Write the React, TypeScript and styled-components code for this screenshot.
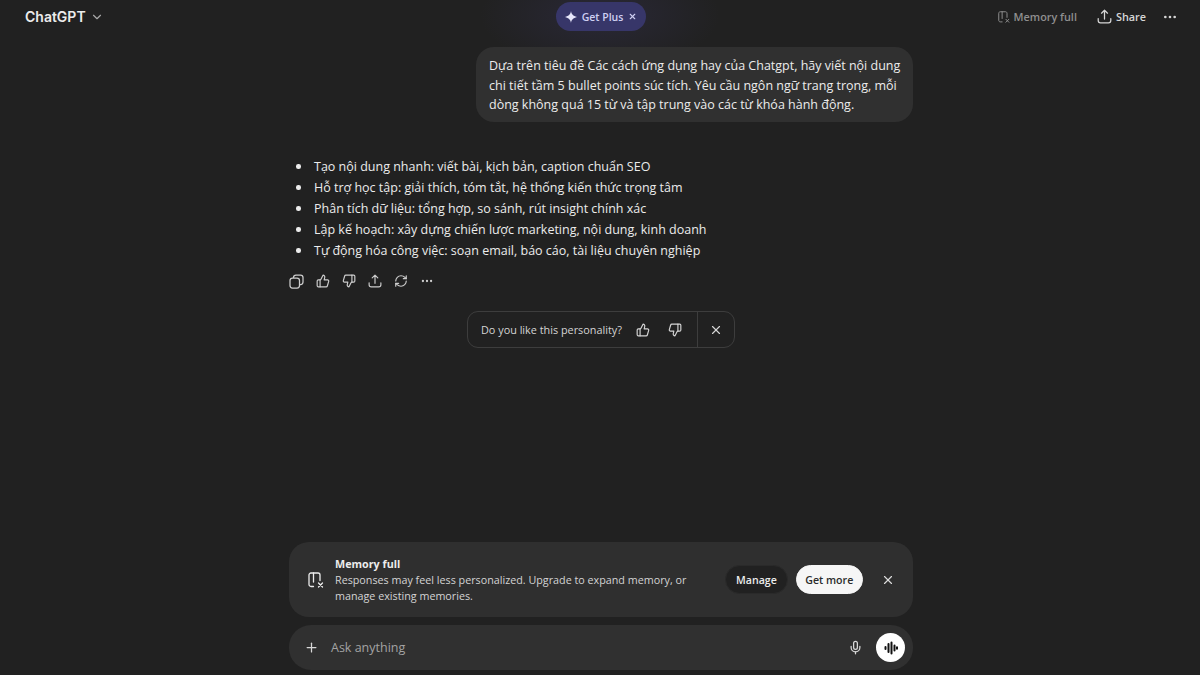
import React from 'react';
import styled, { createGlobalStyle } from 'styled-components';
import { ChevronDown, Ellipsis, Mic, Plus, RefreshCw, ThumbsDown, ThumbsUp, X } from 'lucide-react';

const GlobalStyle = createGlobalStyle`
  html, body {
    margin: 0;
    height: 100%;
    background: #212121;
    overflow: hidden;
  }

  body {
    font-family: "Open Sans", "Liberation Sans", sans-serif;
    color: #ececec;
  }
`;

const Page = styled.div`
  position: relative;
  height: 675px;
  display: flex;
  flex-direction: column;
  background: #212121;
`;

const Glow = styled.div`
  position: absolute;
  left: 480px;
  top: -40px;
  width: 240px;
  height: 110px;
  background: radial-gradient(closest-side, rgba(70, 64, 130, 0.22), rgba(70, 64, 130, 0));
  pointer-events: none;
`;

const Header = styled.header`
  position: relative;
  height: 33px;
  display: grid;
  grid-template-columns: 1fr auto 1fr;
  align-items: center;
  padding: 0 23px 0 25px;
`;

const Brand = styled.div`
  display: flex;
  align-items: center;
  gap: 4px;
  font-family: Inter, sans-serif;
  font-size: 14px;
  font-weight: 600;
  color: #ececec;

  svg {
    color: #a8a8a8;
  }
`;

const PlusPill = styled.div`
  height: 29px;
  width: 90px;
  box-sizing: border-box;
  display: flex;
  align-items: center;
  justify-content: center;
  gap: 5px;
  border-radius: 15px;
  background: #373669;
  color: #cfcff2;
  font-size: 10.5px;
  font-weight: 600;
`;

const HeaderActions = styled.div`
  display: flex;
  justify-content: flex-end;
  align-items: center;
  margin-right: -1px;
`;

const HeaderAction = styled.div<{ $muted?: boolean; $gap: number }>`
  display: flex;
  align-items: center;
  gap: 4px;
  margin-right: ${p => p.$gap}px;
  font-size: 10.85px;
  font-weight: 600;
  color: ${p => (p.$muted ? '#8f8f8f' : '#d6d6d6')};
`;

const Main = styled.main`
  position: relative;
  flex: 1;
  width: 624px;
  margin: 0 287px 0 289px;
  padding-top: 14px;
  display: flex;
  flex-direction: column;
`;

const Bubble = styled.div`
  align-self: flex-end;
  width: 437px;
  height: 75px;
  box-sizing: border-box;
  padding: 9px 13px;
  border-radius: 18px;
  background: #303030;
  font-size: 12.5px;
  line-height: 19.5px;
  color: #ececec;
  white-space: nowrap;
`;

const Answer = styled.ul`
  margin: 34px 0 0;
  padding: 0 0 0 25px;
  list-style: none;
  font-size: 12.5px;
  line-height: 21px;
  color: #ececec;
  white-space: nowrap;
`;

const AnswerItem = styled.li`
  position: relative;

  &::before {
    content: '';
    position: absolute;
    left: -18px;
    top: 8px;
    width: 4.5px;
    height: 4.5px;
    border-radius: 50%;
    background: #ececec;
  }
`;

const Toolbar = styled.div`
  display: flex;
  gap: 12px;
  margin: 13px 0 0;
  color: #cdcdcd;
`;

const Feedback = styled.div`
  align-self: center;
  margin-top: 22px;
  width: 268px;
  height: 37px;
  box-sizing: border-box;
  display: flex;
  align-items: center;
  border: 1px solid #3d3d3d;
  border-radius: 11px;
  font-size: 10.85px;
  color: #d4d4d4;
  padding-left: 13px;
`;

const FeedbackText = styled.span`
  width: 155px;
  white-space: nowrap;
`;

const FeedbackIcons = styled.div`
  display: flex;
  gap: 18px;
  width: 61px;
  color: #d4d4d4;
`;

const FeedbackClose = styled.div`
  flex: 1;
  align-self: stretch;
  display: flex;
  align-items: center;
  justify-content: center;
  border-left: 1px solid #3d3d3d;
`;

const Footer = styled.footer`
  width: 624px;
  margin: 0 287px 5px 289px;
  display: flex;
  flex-direction: column;
  gap: 8px;
`;

const Banner = styled.div`
  height: 75px;
  box-sizing: border-box;
  display: flex;
  align-items: center;
  padding: 0 18px 0 19px;
  border-radius: 20px;
  background: #2f2f2f;
`;

const BannerText = styled.div`
  width: 390px;
  margin-left: 11px;
  font-size: 10.75px;
  line-height: 16px;
  color: #d4d4d4;
`;

const BannerTitle = styled.div`
  font-weight: 700;
  color: #ececec;
`;

const PillButton = styled.div<{ $light?: boolean }>`
  height: 29px;
  box-sizing: border-box;
  display: flex;
  align-items: center;
  padding: 0 ${p => (p.$light ? 8.5 : 10)}px;
  margin-right: 8px;
  border-radius: 15px;
  font-size: 10.6px;
  font-weight: 600;
  color: ${p => (p.$light ? '#2a2a2a' : '#ececec')};
  background: ${p => (p.$light ? '#f6f6f6' : '#212121')};
  border: 1px solid ${p => (p.$light ? '#f6f6f6' : '#2a2a2a')};
`;

const BannerClose = styled.div`
  margin-left: auto;
  display: flex;
  color: #dcdcdc;
`;

const Composer = styled.div`
  height: 45px;
  box-sizing: border-box;
  display: flex;
  align-items: center;
  padding: 0 8px 0 15px;
  border-radius: 22px;
  background: #303030;
  color: #d8d8d8;
`;

const Placeholder = styled.div`
  flex: 1;
  margin: 0 0 1px 12px;
  font-size: 12.5px;
  color: #a3a3a3;
`;

const VoiceButton = styled.div`
  width: 29px;
  height: 29px;
  margin-left: 13px;
  display: flex;
  align-items: center;
  justify-content: center;
  border-radius: 50%;
  background: #fff;
`;

const Sparkle = () => (
  <svg width="12" height="12" viewBox="0 0 12 12" fill="#e6e6fa">
    <path d="M6 0c.5 3.2 2 5 6 6-4 1-5.500 2.800-6 6-.5-3.200-2-5-6-6 4-1 5.500-2.800 6-6z" />
  </svg>
);

const MemoryIcon = ({ size }: { size: number }) => (
  <svg width={size} height={size} viewBox="0 0 16 16" fill="none" stroke="currentColor" strokeWidth="1.3" strokeLinecap="round">
    <path d="M5.500 14.500H3C1.900 14.500 1 13.600 1 12.500V3C1 1.900 1.900 1 3 1H10C11.100 1 12 1.900 12 3V8.500" />
    <path d="M5.500 1V10" />
    <path d="M10.500 11l4 4M14.500 11l-4 4" />
  </svg>
);

const CopyIcon = () => (
  <svg width="15" height="15" viewBox="0 0 15 15" fill="none" stroke="currentColor" strokeWidth="1.250">
    <rect x="1" y="4" width="9.500" height="10" rx="2.500" />
    <path d="M4.500 4V3.500C4.500 2.100 5.600 1 7 1H11.500C12.900 1 14 2.100 14 3.500V8C14 9.400 12.900 10.500 11.500 10.500H10.500" />
  </svg>
);

const ShareIcon = ({ size }: { size: number }) => (
  <svg width={size} height={size} viewBox="0 0 15 15" fill="none" stroke="currentColor" strokeWidth="1.250" strokeLinecap="round" strokeLinejoin="round">
    <path d="M7.500 10V1.200M4.500 4.200l3-3 3 3" />
    <path d="M1.200 9.500V11.500C1.200 12.900 2.100 13.800 3.500 13.800H11.500C12.900 13.800 13.800 12.900 13.800 11.500V9.500" />
  </svg>
);

const Waveform = () => (
  <svg width="14" height="14" viewBox="0 0 14 14" stroke="#111" strokeWidth="2" strokeLinecap="round">
    <path d="M1.500 6v2M4.500 3v8M7.500 1.500v11M10.500 4.500v5M13 6.200v1.600" />
  </svg>
);

const bullets = [
  'Tạo nội dung nhanh: viết bài, kịch bản, caption chuẩn SEO',
  'Hỗ trợ học tập: giải thích, tóm tắt, hệ thống kiến thức trọng tâm',
  'Phân tích dữ liệu: tổng hợp, so sánh, rút insight chính xác',
  'Lập kế hoạch: xây dựng chiến lược marketing, nội dung, kinh doanh',
  'Tự động hóa công việc: soạn email, báo cáo, tài liệu chuyên nghiệp'
];

export default function App (): React.ReactElement {
  return (
    <Page>
      <GlobalStyle />
      <Glow />
      <Header>
        <Brand>ChatGPT <ChevronDown size={14} /></Brand>
        <PlusPill><Sparkle /> Get Plus <X size={9} strokeWidth={3} /></PlusPill>
        <HeaderActions>
          <HeaderAction $muted $gap={20}><MemoryIcon size={12} /> Memory full</HeaderAction>
          <HeaderAction $gap={16}><ShareIcon size={15} /> Share</HeaderAction>
          <Ellipsis size={16} color="#d6d6d6" />
        </HeaderActions>
      </Header>
      <Main>
        <Bubble>
          Dựa trên tiêu đề Các cách ứng dụng hay của Chatgpt, hãy viết nội dung<br />
          chi tiết tầm 5 bullet points súc tích. Yêu cầu ngôn ngữ trang trọng, mỗi<br />
          dòng không quá 15 từ và tập trung vào các từ khóa hành động.
        </Bubble>
        <Answer>
          {bullets.map(b => <AnswerItem key={b}>{b}</AnswerItem>)}
        </Answer>
        <Toolbar>
          <CopyIcon />
          <ThumbsUp size={14} />
          <ThumbsDown size={14} />
          <ShareIcon size={14} />
          <RefreshCw size={14} />
          <Ellipsis size={14} />
        </Toolbar>
        <Feedback>
          <FeedbackText>Do you like this personality?</FeedbackText>
          <FeedbackIcons>
            <ThumbsUp size={14} />
            <ThumbsDown size={14} />
          </FeedbackIcons>
          <FeedbackClose><X size={14} /></FeedbackClose>
        </Feedback>
      </Main>
      <Footer>
        <Banner>
          <MemoryIcon size={16} />
          <BannerText>
            <BannerTitle>Memory full</BannerTitle>
            Responses may feel less personalized. Upgrade to expand memory, or manage existing memories.
          </BannerText>
          <PillButton>Manage</PillButton>
          <PillButton $light>Get more</PillButton>
          <BannerClose><X size={14} /></BannerClose>
        </Banner>
        <Composer>
          <Plus size={15} />
          <Placeholder>Ask anything</Placeholder>
          <Mic size={15} />
          <VoiceButton><Waveform /></VoiceButton>
        </Composer>
      </Footer>
    </Page>
  );
}
